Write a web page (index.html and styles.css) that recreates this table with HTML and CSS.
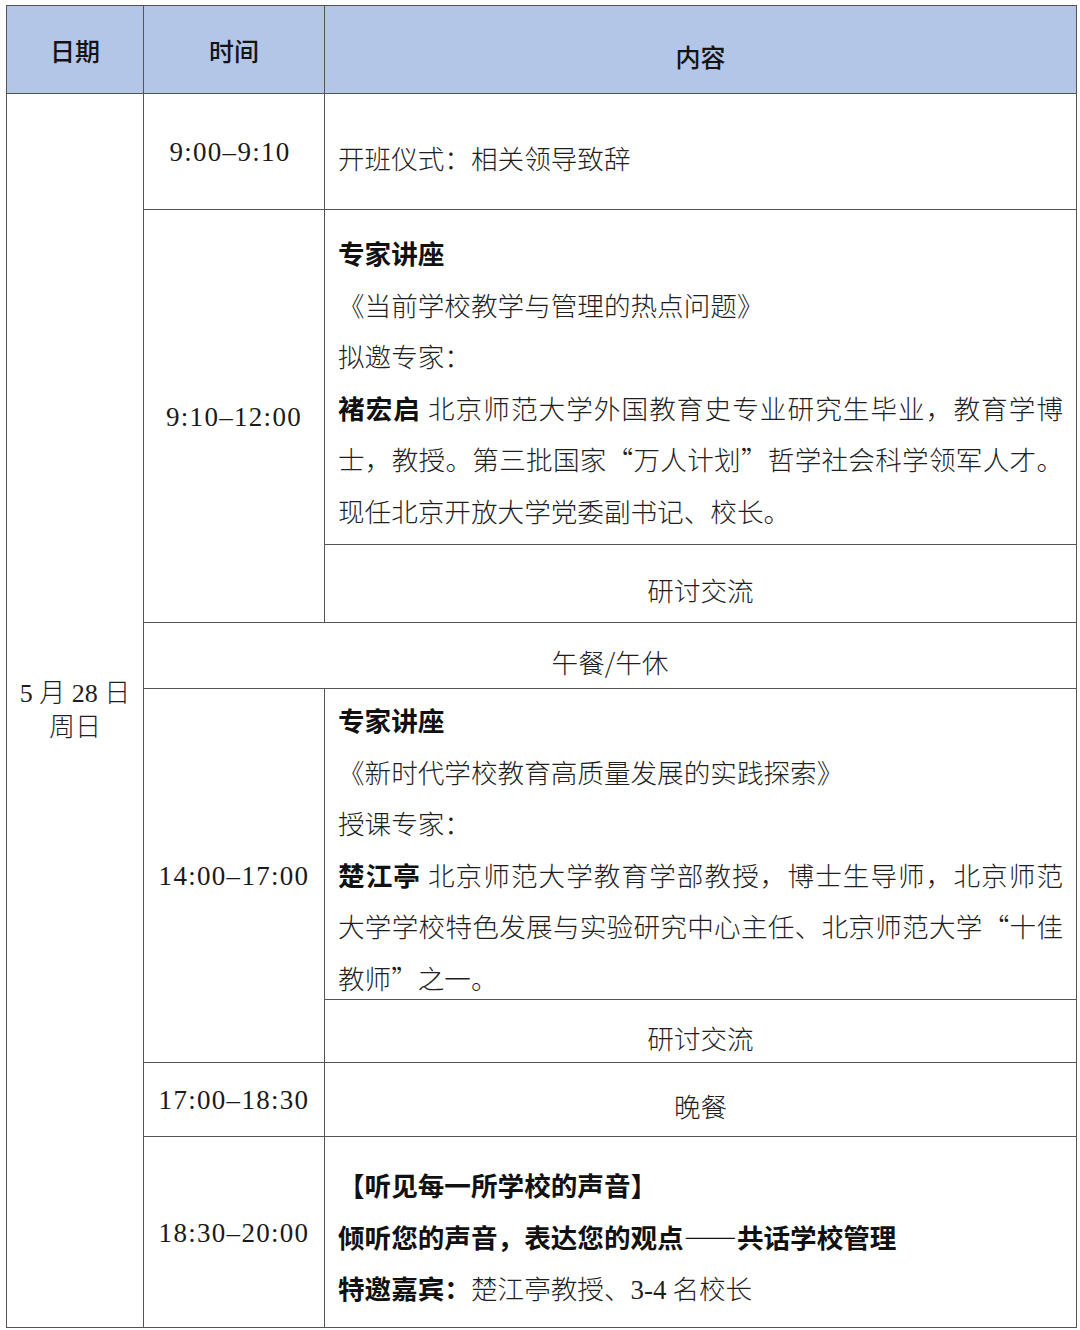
FILE: index.html
```html
<!DOCTYPE html>
<html lang="zh-CN">
<head>
<meta charset="utf-8">
<title>日程安排</title>
<link rel="stylesheet" href="styles.css">
</head>
<body>
<div class="schedule">
  <div class="cell head c1">日期</div>
  <div class="cell head c2">时间</div>
  <div class="cell head c3 low">内容</div>

  <div class="cell date">5 月 28 日<br>周日</div>

  <div class="cell time r1 first">9:00–9:10</div>
  <div class="cell text r1 mid">开班仪式：相关领导致辞</div>

  <div class="cell time r2">9:10–12:00</div>
  <div class="cell text block lec1">
    <span class="line"><b>专家讲座</b></span>
    <span class="line">《当前学校教学与管理的热点问题》</span>
    <span class="line">拟邀专家：</span>
    <span class="line just"><b>褚宏启</b> 北京师范大学外国教育史专业研究生毕业，教育学博</span>
    <span class="line just">士，教授。第三批国家“万人计划”哲学社会科学领军人才。</span>
    <span class="line">现任北京开放大学党委副书记、校长。</span>
  </div>
  <div class="cell center low r2b">研讨交流</div>

  <div class="cell center low lunch">午餐/午休</div>

  <div class="cell time r4">14:00–17:00</div>
  <div class="cell text block lec2">
    <span class="line"><b>专家讲座</b></span>
    <span class="line">《新时代学校教育高质量发展的实践探索》</span>
    <span class="line">授课专家：</span>
    <span class="line just"><b>楚江亭</b> 北京师范大学教育学部教授，博士生导师，北京师范</span>
    <span class="line just">大学学校特色发展与实验研究中心主任、北京师范大学“十佳</span>
    <span class="line">教师”之一。</span>
  </div>
  <div class="cell center low r4b">研讨交流</div>

  <div class="cell time r5">17:00–18:30</div>
  <div class="cell center low r5">晚餐</div>

  <div class="cell time r6">18:30–20:00</div>
  <div class="cell text block eve">
    <span class="line"><b>【听见每一所学校的声音】</b></span>
    <span class="line"><b>倾听您的声音，表达您的观点——共话学校管理</b></span>
    <span class="line"><b>特邀嘉宾：</b>楚江亭教授、<span class="num">3-4</span> 名校长</span>
  </div>
</div>
</body>
</html>
```

FILE: styles.css
```css
html, body {
  margin: 0;
  padding: 0;
  background: #ffffff;
}

body {
  width: 1080px;
  height: 1330px;
  overflow: hidden;
  font-family: "Noto Sans CJK SC", "Noto Sans", sans-serif;
  color: #1f1f1f;
}

.schedule {
  margin: 5px 0 0 6px;
  width: 1069px;
  display: grid;
  grid-template-columns: 136px 180px 751px;
  grid-template-rows: 87px 115px 334px 77px 65px 310px 62px 73px 190px;
  gap: 1px;
  padding: 1px;
  background: #545454;
}

.cell {
  background: #ffffff;
  box-sizing: border-box;
  font-size: 26.6px;
  font-weight: 300;
}

.head {
  background: #b4c6e7;
  display: flex;
  align-items: center;
  justify-content: center;
  font-weight: 500;
  font-size: 25px;
  color: #141414;
  grid-row: 1;
}
.c1 { grid-column: 1; }
.c2 { grid-column: 2; }
.c3 { grid-column: 3; }

.low { padding-top: 12px; }

.date {
  grid-column: 1;
  grid-row: 2 / 10;
  display: flex;
  align-items: center;
  justify-content: center;
  text-align: center;
  font-family: "Liberation Serif", "Noto Sans CJK SC", serif;
  font-size: 26px;
  line-height: 34px;
}

.time {
  grid-column: 2;
  display: flex;
  align-items: center;
  justify-content: center;
  padding-top: 2px;
  font-family: "Liberation Serif", serif;
  font-size: 27px;
  font-weight: 400;
  letter-spacing: 1.3px;
  color: #1a1a1a;
}
.time.first { padding-right: 8px; }

.r1 { grid-row: 2; }
.r2 { grid-row: 3 / 5; }
.r4 { grid-row: 6 / 8; }
.r5 { grid-row: 8; }
.r6 { grid-row: 9; }

.text {
  grid-column: 3;
  padding-left: 13px;
  padding-right: 13px;
}

.mid {
  display: flex;
  align-items: center;
  padding-top: 12px;
}

.center {
  grid-column: 3;
  display: flex;
  align-items: center;
  justify-content: center;
}

.lunch {
  grid-column: 2 / 4;
  grid-row: 5;
}

.r2b { grid-row: 4; }
.r4b { grid-row: 7; }

.block {
  line-height: 51.5px;
}
.lec1 { grid-row: 3; padding-top: 17px; }
.lec2 { grid-row: 6; padding-top: 5px; }
.eve { grid-row: 9; padding-top: 22px; }

.line {
  display: block;
  white-space: nowrap;
}
.line.just {
  text-align: justify;
  text-align-last: justify;
  white-space: normal;
}

.num {
  font-family: "Liberation Serif", serif;
  font-size: 27px;
}

b {
  font-weight: 700;
  color: #111111;
}
```
